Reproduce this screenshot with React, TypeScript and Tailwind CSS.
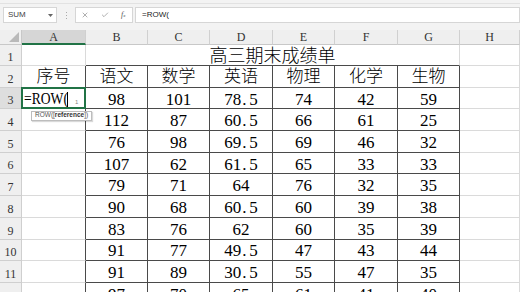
import { Check, X } from "lucide-react";

const COLS = ["A", "B", "C", "D", "E", "F", "G", "H"];
const HEAD = ["语文", "数学", "英语", "物理", "化学", "生物"];
const DATA = [
  ["98", "101", "78.5", "74", "42", "59"],
  ["112", "87", "60.5", "66", "61", "25"],
  ["76", "98", "69.5", "69", "46", "32"],
  ["107", "62", "61.5", "65", "33", "33"],
  ["79", "71", "64", "76", "32", "35"],
  ["90", "68", "60.5", "60", "39", "38"],
  ["83", "76", "62", "60", "35", "39"],
  ["91", "77", "49.5", "47", "43", "44"],
  ["91", "89", "30.5", "55", "47", "35"],
  ["97", "70", "65", "61", "41", "40"],
];

// SimSun style: the decimal point takes a full digit cell
function Num({ v }: { v: string }) {
  const [a, b] = v.split(".");
  if (b === undefined) return <>{v}</>;
  return (
    <>
      {a}
      <span className="inline-block w-[8px] pl-[1px] text-left">.</span>
      {b}
    </>
  );
}

function RowHead({ n, active }: { n: number; active?: boolean }) {
  return (
    <div
      className={`flex items-end justify-center pb-[2px] border-r border-b border-[#cfcfcf] text-[12px] leading-none text-[#333] ${
        active ? "bg-[#dedede]" : "bg-[#efefef]"
      }`}
    >
      {n}
    </div>
  );
}

const light = "border-r border-b border-[#dadada]";
const dark = "border-r border-b border-[#4a4a4a]";

function FormulaBar() {
  return (
    <div className="h-[30px] bg-[#f3f3f3] flex flex-col font-['Liberation_Sans',sans-serif]">
      <div className="h-[4px] border-b border-[#e2e2e2]" />
      <div className="flex items-center h-[22px] pl-[3px]">
        <div className="w-[54px] h-[16px] bg-white border border-[#d6d6d6] flex items-center justify-between pl-[4px] pr-[3px] text-[8px] text-[#444]">
          <span>SUM</span>
          <svg width="5" height="3" viewBox="0 0 5 3">
            <path d="M0 0h5L2.5 3z" fill="#666" />
          </svg>
        </div>
        <div className="w-[18px] flex flex-col items-center gap-[2px]">
          <span className="w-[1px] h-[1px] bg-[#aaa]" />
          <span className="w-[1px] h-[1px] bg-[#aaa]" />
          <span className="w-[1px] h-[1px] bg-[#aaa]" />
        </div>
        <div className="w-[58px] h-[16px] bg-white border border-[#d6d6d6] flex items-center pl-[5px] gap-[12px] text-[#555]">
          <X size={8} strokeWidth={1.4} />
          <Check size={8} strokeWidth={1.4} />
          <span className="font-['Liberation_Serif',serif] italic text-[8px] leading-none">
            f<span className="text-[5px]">x</span>
          </span>
        </div>
        <div className="flex-1 h-[16px] ml-[2px] bg-white border border-[#d6d6d6] flex items-center px-[6px] text-[8px] text-[#222]">
          =ROW(
        </div>
      </div>
    </div>
  );
}

export default function App() {
  return (
    <div className="w-[520px] h-[292px] overflow-hidden bg-white">
      <FormulaBar />
      <div className="grid grid-cols-[22px_64px_62px_62px_63px_62px_63px_62px_1fr] grid-rows-[15px_21px_repeat(11,21.7px)] font-['Liberation_Serif','Noto_Sans_CJK_SC',serif] text-black">
        {/* column headers */}
        <div className="relative bg-[#efefef] border-r border-b border-[#c8c8c8]">
          <svg className="absolute right-[2px] bottom-[2px]" width="10" height="10" viewBox="0 0 10 10">
            <path d="M10 0v10H0z" fill="#b9b9b9" />
          </svg>
        </div>
        {COLS.map((c, i) => (
          <div
            key={c}
            className={`flex items-center justify-center text-[12px] leading-none text-[#333] border-r border-[#d0d0d0] ${
              i === 0
                ? "bg-[#d6d6d6] border-b-2 border-b-[#217346]"
                : "bg-[#efefef] border-b border-b-[#c8c8c8]"
            }`}
          >
            {c}
          </div>
        ))}

        {/* row 1 */}
        <RowHead n={1} />
        <div className={light} />
        <div className="col-span-6 flex items-center justify-center border-r border-r-[#dadada] border-b border-b-[#4a4a4a] text-[18px] font-light leading-none pt-[1px]">
          高三期末成绩单
        </div>
        <div className={light} />

        {/* row 2 */}
        <RowHead n={2} />
        <div className="flex items-center justify-center border-r border-r-[#4a4a4a] border-b border-b-[#dadada] text-[17px] font-light leading-none pt-[1px]">
          序号
        </div>
        {HEAD.map((h) => (
          <div key={h} className={`${dark} flex items-center justify-center text-[17px] font-light leading-none pt-[1px]`}>
            {h}
          </div>
        ))}
        <div className={light} />

        {/* data rows */}
        {DATA.map((row, r) => (
          <div key={r} className="contents">
            <RowHead n={r + 3} active={r === 0} />
            {r === 0 ? (
              <div className="relative z-10 flex items-center border-r border-r-[#4a4a4a] border-b border-b-[#dadada] pl-[2px] pt-[2px]">
                <span className="inline-block w-[42px] overflow-visible whitespace-nowrap">
                  <span className="inline-block origin-left scale-x-[0.8] text-[17px] leading-none">=ROW(</span>
                </span>
                <span className="ml-[1px] w-[1px] h-[15px] bg-black" />
                <span className="ml-[7px] mt-[6px] text-[6px] leading-none text-[#888] font-['Liberation_Sans',sans-serif]">1</span>
                <div className="absolute -left-[1px] -top-[1px] -right-[1px] -bottom-[1px] border-2 border-[#217346] pointer-events-none" />
                <div className="absolute left-[9px] top-[23px] h-[10px] px-[3px] bg-white border border-[#bdbdbd] flex items-center text-[6.5px] leading-none text-[#555] font-['Liberation_Sans',sans-serif] whitespace-nowrap shadow-[1px_1px_1px_rgba(0,0,0,0.15)]">
                  ROW([<b className="text-[#333]">reference</b>])
                </div>
              </div>
            ) : (
              <div className="border-r border-r-[#4a4a4a] border-b border-b-[#dadada]" />
            )}
            {row.map((v, c) => (
              <div key={c} className={`${dark} flex items-center justify-center text-[17px] leading-none pt-[2px]`}>
                <Num v={v} />
              </div>
            ))}
            <div className={light} />
          </div>
        ))}
      </div>
    </div>
  );
}
